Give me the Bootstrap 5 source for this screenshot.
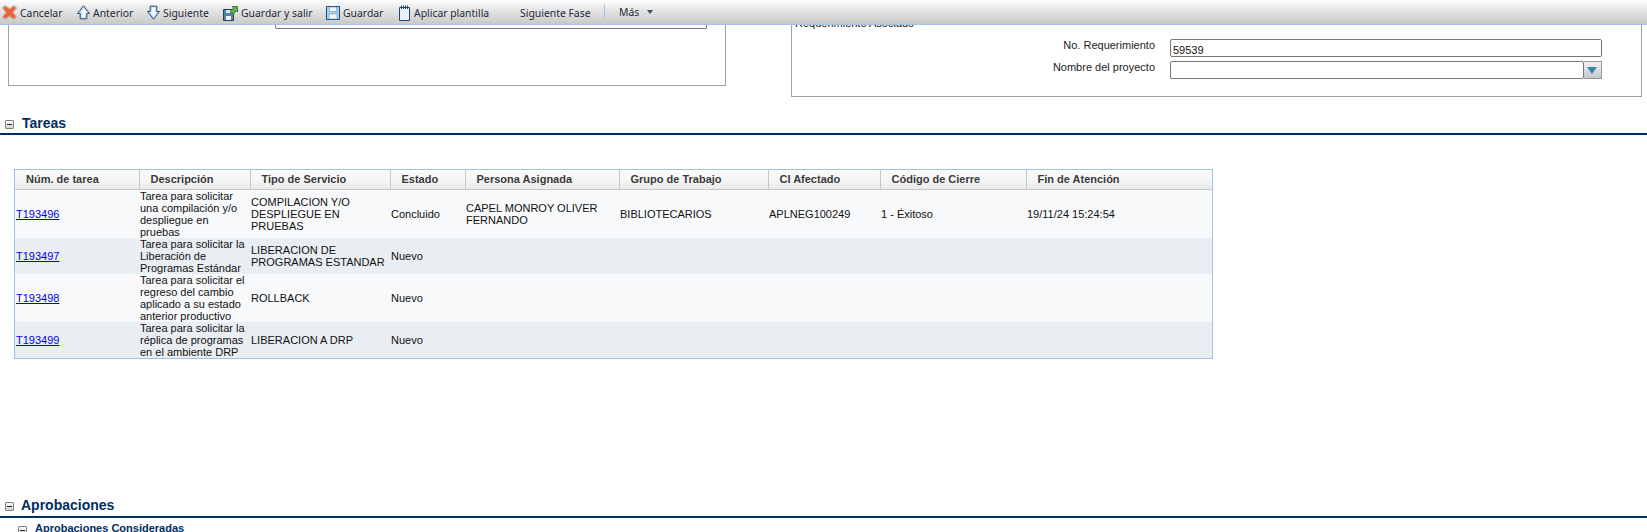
<!DOCTYPE html>
<html lang="es">
<head>
  <meta charset="UTF-8">
  <title>Tareas</title>
  <link href="https://cdn.jsdelivr.net/npm/bootstrap@5.3.0/dist/css/bootstrap.min.css" rel="stylesheet">
  <style>
    html, body {
      height: 532px;
      overflow: hidden;
    }

    body {
      font-family: "Liberation Sans", Arial, sans-serif;
      font-size: 11px;
      line-height: 12px;
      color: #111;
      background: #fff;
    }

    /* toolbar stays on top of the scrolled form */
    .tool-strip {
      position: fixed;
      top: 0;
      left: 0;
      right: 0;
      height: 25px;
      z-index: 10;
      background: linear-gradient(to bottom, #ffffff 0, #e6e6e6 40%, #c9c9c9 100%);
      border-bottom: 1px solid #9fc4ea;
      font-family: "Noto Sans", "DejaVu Sans", sans-serif;
      font-size: 10.4px;
      color: #1c2a3a;
    }

    .tool-item {
      position: absolute;
      top: 4px;
      display: flex;
      align-items: center;
      gap: 3px;
      height: 17px;
      white-space: nowrap;
    }

    .tool-item svg {
      flex: none;
    }

    .tool-sep {
      position: absolute;
      left: 604px;
      top: 4px;
      width: 1px;
      height: 17px;
      background: #a9c6e4;
    }

    .mas-caret {
      width: 0;
      height: 0;
      margin-left: 5px;
      border-left: 3px solid transparent;
      border-right: 3px solid transparent;
      border-top: 4px solid #33506e;
    }

    .form-top {
      height: 98px;
    }

    .box-left {
      width: 718px;
      height: 86px;
      margin-left: 8px;
      border: 1px solid #a0a0a0;
      border-top: 0;
    }

    .box-left-input {
      width: 432px;
      height: 29px;
      margin-left: 266px;
      border: 1px solid #777;
      border-top: 0;
      border-radius: 0 0 2px 2px;
    }

    .box-right {
      width: 851px;
      height: 97px;
      margin-left: 65px;
      border: 1px solid #a0a0a0;
      border-top: 0;
      padding-left: 3px;
    }

    .box-legend {
      height: 39px;
      padding-top: 17px;
    }

    .field-row {
      height: 22px;
      gap: 15px;
    }

    .field-label {
      width: 360px;
      flex: none;
      text-align: right;
      color: #1a1a1a;
    }

    .field-input {
      width: 432px;
      height: 18px;
      border: 1px solid #777;
      border-radius: 2px;
      padding: 4px 0 0 2px;
      line-height: 12px;
      color: #111;
    }

    .field-combo {
      width: 414px;
    }

    .combo-btn {
      width: 18px;
      height: 18px;
      background: linear-gradient(to bottom, #f1f1f1, #c4c8cc);
      border: 1px solid #9a9a9a;
      border-left: 0;
      padding-left: 3px;
      padding-top: 5px;
    }

    .combo-arrow {
      width: 0;
      height: 0;
      border-left: 5px solid transparent;
      border-right: 5px solid transparent;
      border-top: 7px solid #3c83b5;
    }

    .sec-head {
      height: 37px;
      border-bottom: 2px solid #002d62;
      padding-left: 5px;
      padding-top: 18px;
      gap: 8px;
      color: #002d62;
      font-weight: bold;
      font-size: 14px;
      line-height: 14px;
    }

    .sec-aprob {
      height: 25px;
      padding-top: 5px;
      margin-top: 134px;
      gap: 7px;
    }

    .toggle-box {
      flex: none;
      width: 9px;
      height: 9px;
      border: 1px solid #7d7d7d;
      border-radius: 1px;
      background: linear-gradient(to bottom, #fff, #d3d3d3);
      position: relative;
    }

    .toggle-box::after {
      content: "";
      position: absolute;
      left: 1px;
      right: 1px;
      top: 3px;
      height: 1px;
      background: #222;
    }

    .task-wrap {
      width: 1199px;
      margin: 34px 0 0 14px;
      border: 1px solid #a0c0e8;
    }

    .task-table {
      width: 100%;
      table-layout: fixed;
      border-collapse: collapse;
    }

    .task-table th {
      height: 19px;
      padding: 0 0 0 11px;
      font-weight: bold;
      font-size: 11px;
      color: #3a3a3a;
      background: linear-gradient(to bottom, #fbfbfb 0, #f6f6f6 50%, #e9eaea 100%);
      border-bottom: 1px solid #c6c8ca;
      border-right: 1px solid #c6c8ca;
      white-space: nowrap;
    }

    .task-table th:last-child {
      border-right: 0;
    }

    .task-table td {
      padding: 0 0 0 1px;
      vertical-align: middle;
    }

    .task-table tr.row-a td {
      background: #f7f9fb;
    }

    .task-table tr.row-b td {
      background: #e9eef2;
    }

    .task-table a {
      color: #0000e6;
    }

    .sub-head {
      gap: 8px;
      padding-left: 18px;
      padding-top: 4px;
      color: #002d62;
      font-weight: bold;
      font-size: 11px;
      line-height: 12px;
    }
  </style>
</head>
<body>
  <div class="tool-strip">
    <div class="tool-item" style="left:2px">
      <svg width="15" height="15" viewBox="0 0 15 15"><path d="M3 .8 7.500 3.800 12 .8 14.300 3 11 7.500 14.300 12 12 14.200 7.500 11.200 3 14.200.7 12 4 7.500.7 3Z" fill="#ee5f3c" stroke="#c4ab9c" stroke-width="1.200" stroke-linejoin="round"/></svg>
      <span>Cancelar</span>
    </div>
    <div class="tool-item" style="left:77px">
      <svg width="13" height="15" viewBox="0 0 13 15"><path d="M6.500 .8 12.500 8.500H9.800V13.800H3.200V8.500H.5Z" fill="#c9deee" stroke="#244f76" stroke-linejoin="round"/><path d="M6.500 3.500 9.500 7.500H8V12.500H5V7.500H3.500Z" fill="#f6fafd"/></svg>
      <span>Anterior</span>
    </div>
    <div class="tool-item" style="left:147px">
      <svg width="13" height="15" viewBox="0 0 13 15"><path d="M6.500 14.200 12.500 6.500H9.800V1.200H3.200V6.500H.5Z" fill="#c9deee" stroke="#244f76" stroke-linejoin="round"/><path d="M6.500 11.500 9.500 7.500H8V2.500H5V7.500H3.500Z" fill="#f6fafd"/></svg>
      <span>Siguiente</span>
    </div>
    <div class="tool-item" style="left:223px">
      <svg width="15" height="16" viewBox="0 0 15 16"><path d="M.5 4.500H10.500V15.500H.5Z" fill="#4f86a8" stroke="#1e3f5e"/><path d="M3 5H8V8H3Z" fill="#dfe8ee"/><path d="M3 11H8V15H3Z" fill="#eef2f5"/><path d="M7 7 10.500 3 9 1.500H14.500V7L13 5.500 10.500 9.500Z" fill="#63b04a" stroke="#2c6b2a" stroke-width=".8"/></svg>
      <span>Guardar y salir</span>
    </div>
    <div class="tool-item" style="left:326px">
      <svg width="14" height="14" viewBox="0 0 14 14"><path d="M.5.5H13.500V13.500H.5Z" fill="#a9cfee" stroke="#1f4f80"/><path d="M3.500 1H10.500V5.500H3.500Z" fill="#f2f5f8" stroke="#6f93b3" stroke-width=".6"/><path d="M3 8H11V13H3Z" fill="#f2f5f8" stroke="#6f93b3" stroke-width=".6"/></svg>
      <span>Guardar</span>
    </div>
    <div class="tool-item" style="left:398px">
      <svg width="13" height="16" viewBox="0 0 13 16"><path d="M1.500 2.500H11.500V15.500H1.500Z" fill="#eaf2f9" stroke="#22476b"/><path d="M3.500.5V4M5.500.5V4M7.500.5V4M9.500.5V4" stroke="#22476b"/></svg>
      <span>Aplicar plantilla</span>
    </div>
    <div class="tool-item" style="left:520px"><span>Siguiente Fase</span></div>
    <div class="tool-sep"></div>
    <div class="tool-item" style="left:619px;top:3px"><span>Más</span><span class="mas-caret"></span></div>
  </div>

  <div class="form-top d-flex align-items-start">
    <div class="box-left flex-none">
      <div class="box-left-input"></div>
    </div>
    <div class="box-right flex-none">
      <div class="box-legend">Requerimiento Asociado</div>
      <div class="field-row d-flex">
        <div class="field-label">No. Requerimiento</div>
        <div class="field-input">59539</div>
      </div>
      <div class="field-row d-flex">
        <div class="field-label">Nombre del proyecto</div>
        <div class="d-flex">
          <div class="field-input field-combo"></div>
          <div class="combo-btn"><div class="combo-arrow"></div></div>
        </div>
      </div>
    </div>
  </div>

  <div class="sec-head d-flex align-items-start"><span class="toggle-box mt-1"></span><span>Tareas</span></div>

  <div class="task-wrap">
    <table class="task-table">
      <colgroup>
        <col style="width:124px"><col style="width:111px"><col style="width:140px"><col style="width:75px"><col style="width:154px"><col style="width:149px"><col style="width:112px"><col style="width:146px"><col>
      </colgroup>
      <thead>
        <tr>
          <th>Núm. de tarea</th><th>Descripción</th><th>Tipo de Servicio</th><th>Estado</th><th>Persona Asignada</th><th>Grupo de Trabajo</th><th>CI Afectado</th><th>Código de Cierre</th><th>Fin de Atención</th>
        </tr>
      </thead>
      <tbody>
        <tr class="row-a">
          <td><a href="#">T193496</a></td>
          <td>Tarea para solicitar<br>una compilación y/o<br>despliegue en<br>pruebas</td>
          <td>COMPILACION Y/O<br>DESPLIEGUE EN<br>PRUEBAS</td>
          <td>Concluido</td>
          <td>CAPEL MONROY OLIVER<br>FERNANDO</td>
          <td>BIBLIOTECARIOS</td>
          <td>APLNEG100249</td>
          <td>1 - Éxitoso</td>
          <td>19/11/24 15:24:54</td>
        </tr>
        <tr class="row-b">
          <td><a href="#">T193497</a></td>
          <td>Tarea para solicitar la<br>Liberación de<br>Programas Estándar</td>
          <td>LIBERACION DE<br>PROGRAMAS ESTANDAR</td>
          <td>Nuevo</td><td></td><td></td><td></td><td></td><td></td>
        </tr>
        <tr class="row-a">
          <td><a href="#">T193498</a></td>
          <td>Tarea para solicitar el<br>regreso del cambio<br>aplicado a su estado<br>anterior productivo</td>
          <td>ROLLBACK</td>
          <td>Nuevo</td><td></td><td></td><td></td><td></td><td></td>
        </tr>
        <tr class="row-b">
          <td><a href="#">T193499</a></td>
          <td>Tarea para solicitar la<br>réplica de programas<br>en el ambiente DRP</td>
          <td>LIBERACION A DRP</td>
          <td>Nuevo</td><td></td><td></td><td></td><td></td><td></td>
        </tr>
      </tbody>
    </table>
  </div>

  <div class="sec-head sec-aprob d-flex align-items-start"><span class="toggle-box mt-1"></span><span>Aprobaciones</span></div>
  <div class="sub-head d-flex align-items-start"><span class="toggle-box mt-1"></span><span>Aprobaciones Consideradas</span></div>

  <script src="https://cdn.jsdelivr.net/npm/bootstrap@5.3.0/dist/js/bootstrap.bundle.min.js"></script>
</body>
</html>
